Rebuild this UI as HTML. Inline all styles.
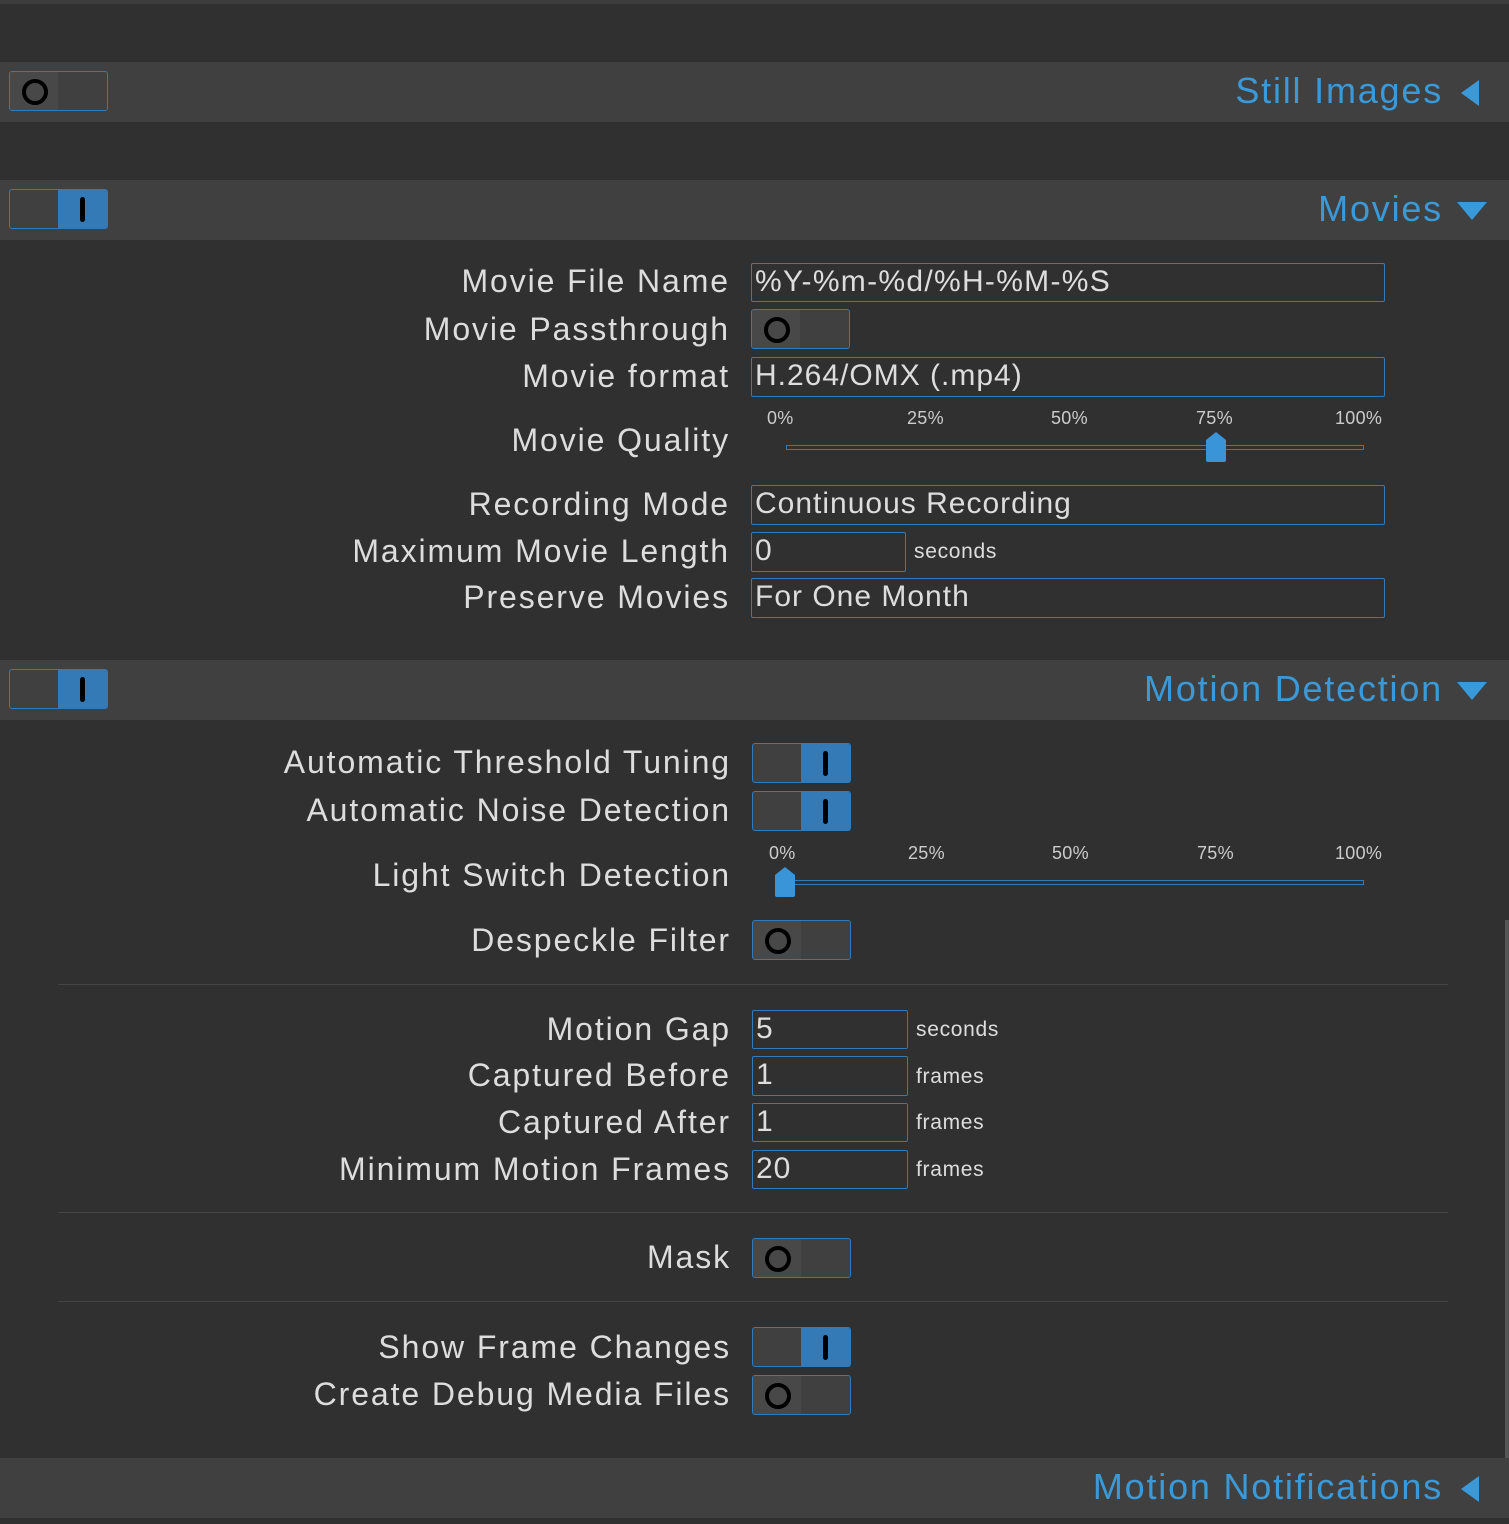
<!DOCTYPE html>
<html><head><meta charset="utf-8"><style>
body{margin:0;width:1509px;height:1524px;background:#303030;position:relative;overflow:hidden;font-family:"Liberation Sans","DejaVu Sans",sans-serif;color:#ddd}
.a{position:absolute}
.hdr{position:absolute;left:0;width:1509px;height:60px;background:#404040}
.ht{position:absolute;right:66px;top:8px;font-size:36px;color:#3a9ad9;white-space:nowrap;letter-spacing:1.8px}
.tri{position:absolute;right:22px;top:18px}
.tg{position:absolute;width:97px;height:38px;border:1px solid #337ab7;border-radius:3px;overflow:hidden;background:#404040}
.tg .l{position:absolute;left:0;top:0;width:48px;height:38px}
.tg .r{position:absolute;left:48px;top:0;width:50px;height:38px}
.off .l{background:#484848}
.on .r{background:#337ab7}
.circ{position:absolute;left:12px;top:7px;width:18px;height:18px;border:4px solid #000;border-radius:50%}
.bar{position:absolute;left:22px;top:7px;width:5px;height:25px;background:#000;border-radius:3px}
.lb{position:absolute;right:779px;font-size:32px;white-space:nowrap;color:#ddd;letter-spacing:1.9px}
.in{position:absolute;border:1px solid #337ab7;border-radius:2px;font-size:30px;line-height:36px;padding-left:3px;box-sizing:border-box;white-space:nowrap;color:#ddd;letter-spacing:1px}
.un{position:absolute;font-size:21px;color:#ddd;letter-spacing:0.7px}
.pct{position:absolute;font-size:18px;color:#ccc;letter-spacing:0.3px}
.trk{position:absolute;height:5px;border:1px solid #337ab7;box-sizing:border-box}
.sep{position:absolute;left:58px;width:1390px;height:1px;background:#444}
</style></head><body>
<div class="a" style="left:0;top:0;width:1509px;height:4px;background:#3c3c3c"></div>

<div class="hdr" style="top:62px"><div class="tg off" style="left:9px;top:9px"><div class="l"><div class="circ"></div></div><div class="r"></div></div>
<div class="ht">Still Images</div><svg class="tri" style="right:30px" width="18" height="26"><polygon points="18,0 18,26 0,13" fill="#3a9ad9"/></svg></div>

<div class="hdr" style="top:180px"><div class="tg on" style="left:9px;top:9px"><div class="l"></div><div class="r"><div class="bar"></div></div></div>
<div class="ht">Movies</div><svg class="tri" style="top:22px" width="30" height="18"><polygon points="0,0 30,0 15,18" fill="#3a9ad9"/></svg></div>

<div class="lb" style="top:263px">Movie File Name</div>
<div class="in" style="left:751px;top:263px;width:634px;height:39px;letter-spacing:1.3px">%Y-%m-%d/%H-%M-%S</div>
<div class="lb" style="top:311px">Movie Passthrough</div>
<div class="tg off" style="left:751px;top:309px"><div class="l"><div class="circ"></div></div><div class="r"></div></div>
<div class="lb" style="top:358px">Movie format</div>
<div class="in" style="left:751px;top:357px;width:634px;height:40px">H.264/OMX (.mp4)</div>
<div class="lb" style="top:422px">Movie Quality</div>
<div class="pct" style="left:767px;top:408px">0%</div><div class="pct" style="left:907px;top:408px">25%</div><div class="pct" style="left:1051px;top:408px">50%</div><div class="pct" style="left:1196px;top:408px">75%</div><div class="pct" style="left:1335px;top:408px">100%</div>
<div class="trk" style="left:786px;top:445px;width:578px"></div>
<svg class="a" style="left:1206px;top:432px" width="20" height="30"><path d="M0,8 L10,0 L20,8 L20,28 Q20,30 18,30 L2,30 Q0,30 0,28Z" fill="#3a94d8"/></svg>
<div class="lb" style="top:486px">Recording Mode</div>
<div class="in" style="left:751px;top:485px;width:634px;height:40px">Continuous Recording</div>
<div class="lb" style="top:533px">Maximum Movie Length</div>
<div class="in" style="left:751px;top:532px;width:155px;height:40px">0</div><div class="un" style="left:914px;top:540px">seconds</div>
<div class="lb" style="top:579px">Preserve Movies</div>
<div class="in" style="left:751px;top:578px;width:634px;height:40px">For One Month</div>

<div class="hdr" style="top:660px"><div class="tg on" style="left:9px;top:9px"><div class="l"></div><div class="r"><div class="bar"></div></div></div>
<div class="ht">Motion Detection</div><svg class="tri" style="top:22px" width="30" height="18"><polygon points="0,0 30,0 15,18" fill="#3a9ad9"/></svg></div>

<div class="lb" style="top:744px;right:778px">Automatic Threshold Tuning</div>
<div class="tg on" style="left:752px;top:743px"><div class="l"></div><div class="r"><div class="bar"></div></div></div>
<div class="lb" style="top:792px;right:778px">Automatic Noise Detection</div>
<div class="tg on" style="left:752px;top:791px"><div class="l"></div><div class="r"><div class="bar"></div></div></div>
<div class="lb" style="top:857px;right:778px">Light Switch Detection</div>
<div class="pct" style="left:769px;top:843px">0%</div><div class="pct" style="left:908px;top:843px">25%</div><div class="pct" style="left:1052px;top:843px">50%</div><div class="pct" style="left:1197px;top:843px">75%</div><div class="pct" style="left:1335px;top:843px">100%</div>
<div class="trk" style="left:786px;top:880px;width:578px"></div>
<svg class="a" style="left:775px;top:867px" width="20" height="30"><path d="M0,8 L10,0 L20,8 L20,28 Q20,30 18,30 L2,30 Q0,30 0,28Z" fill="#3a94d8"/></svg>
<div class="lb" style="top:922px;right:778px">Despeckle Filter</div>
<div class="tg off" style="left:752px;top:920px"><div class="l"><div class="circ"></div></div><div class="r"></div></div>
<div class="sep" style="top:984px"></div>

<div class="lb" style="top:1011px;right:778px">Motion Gap</div>
<div class="in" style="left:752px;top:1010px;width:156px;height:39px">5</div><div class="un" style="left:916px;top:1018px">seconds</div>
<div class="lb" style="top:1057px;right:778px">Captured Before</div>
<div class="in" style="left:752px;top:1056px;width:156px;height:40px">1</div><div class="un" style="left:916px;top:1065px">frames</div>
<div class="lb" style="top:1104px;right:778px">Captured After</div>
<div class="in" style="left:752px;top:1103px;width:156px;height:39px">1</div><div class="un" style="left:916px;top:1111px">frames</div>
<div class="lb" style="top:1151px;right:778px">Minimum Motion Frames</div>
<div class="in" style="left:752px;top:1150px;width:156px;height:39px">20</div><div class="un" style="left:916px;top:1158px">frames</div>
<div class="sep" style="top:1212px"></div>

<div class="lb" style="top:1239px;right:778px">Mask</div>
<div class="tg off" style="left:752px;top:1238px"><div class="l"><div class="circ"></div></div><div class="r"></div></div>
<div class="sep" style="top:1301px"></div>

<div class="lb" style="top:1329px;right:778px">Show Frame Changes</div>
<div class="tg on" style="left:752px;top:1327px"><div class="l"></div><div class="r"><div class="bar"></div></div></div>
<div class="lb" style="top:1376px;right:778px">Create Debug Media Files</div>
<div class="tg off" style="left:752px;top:1375px"><div class="l"><div class="circ"></div></div><div class="r"></div></div>

<div class="hdr" style="top:1458px"><div class="ht">Motion Notifications</div><svg class="tri" style="right:30px" width="18" height="26"><polygon points="18,0 18,26 0,13" fill="#3a9ad9"/></svg></div>
<div class="a" style="left:1505px;top:920px;width:4px;height:538px;background:#555"></div>
</body></html>
